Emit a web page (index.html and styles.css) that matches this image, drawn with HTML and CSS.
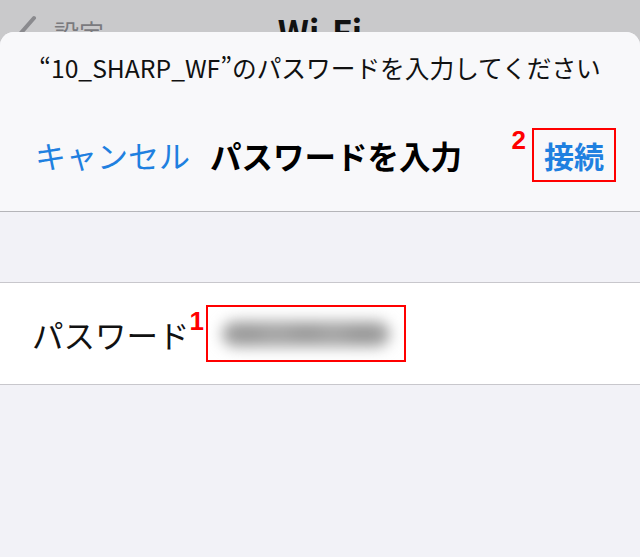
FILE: index.html
```html
<!DOCTYPE html>
<html lang="ja">
<head>
<meta charset="utf-8">
<link rel="stylesheet" href="styles.css">
</head>
<body>
<div class="screen">
  <div class="nav">
    <div class="back">
      <svg class="chev" width="26" height="40" viewBox="0 0 26 40"><polyline points="20,4 6,20 20,36" fill="none" stroke="#8a8a8e" stroke-width="4" stroke-linecap="round" stroke-linejoin="round"/></svg>
      <span class="back-label">設定</span>
    </div>
    <div class="nav-title">Wi-Fi</div>
  </div>
  <div class="sheet">
    <div class="header">
      <div class="prompt">“10_SHARP_WF”のパスワードを入力してください</div>
      <div class="bar">
        <span class="cancel">キャンセル</span>
        <span class="title">パスワードを入力</span>
        <span class="spacer"></span>
        <span class="mark mark-2">2</span>
        <span class="hl hl-join"><span class="join">接続</span></span>
      </div>
    </div>
    <div class="gap"></div>
    <div class="row">
      <span class="label">パスワード</span>
      <span class="mark mark-1">1</span>
      <span class="hl hl-pass">
        <span class="blurred"></span>
      </span>
    </div>
  </div>
</div>
</body>
</html>
```
FILE: styles.css
```css
html, body {
  margin: 0;
  padding: 0;
}
body {
  width: 640px;
  height: 557px;
  overflow: hidden;
  font-family: "Noto Sans CJK JP", "Noto Sans", sans-serif;
  background: #f2f2f7;
}
.screen {
  width: 640px;
  height: 557px;
  display: flex;
  flex-direction: column;
  background: #c9c9cb;
}
.nav {
  height: 32px;
  flex: none;
  overflow: hidden;
  display: flex;
  align-items: flex-start;
  position: relative;
}
.back {
  display: flex;
  align-items: flex-start;
  padding-left: 14px;
  padding-top: 14px;
  gap: 14px;
}
.back-label {
  font-size: 25px;
  line-height: 36px;
  color: #7a7a7e;
}
.nav-title {
  position: absolute;
  left: 0;
  right: 0;
  top: 8px;
  text-align: center;
  font-size: 34px;
  line-height: 46px;
  font-weight: 700;
  color: #111;
}
.sheet {
  flex: 1;
  background: #f2f2f7;
  border-radius: 14px 14px 0 0;
  overflow: hidden;
  display: flex;
  flex-direction: column;
}
.header {
  background: #f8f8fa;
  border-bottom: 1px solid #b5b5b9;
  padding: 20px 0 28px;
}
.prompt {
  text-align: center;
  font-size: 24.7px;
  line-height: 30px;
  color: #111;
  white-space: nowrap;
}
.bar {
  margin-top: 45px;
  height: 56px;
  display: flex;
  align-items: center;
  padding: 0 24px 0 35px;
}
.cancel {
  font-size: 31px;
  line-height: 40px;
  color: #1f80e0;
}
.title {
  margin-left: 20px;
  font-size: 31.5px;
  line-height: 40px;
  font-weight: 700;
  color: #000;
}
.spacer {
  flex: 1;
}
.mark {
  color: #f00;
  font-family: "Liberation Sans", Arial, sans-serif;
  font-weight: 700;
  font-size: 26px;
  line-height: 26px;
  align-self: flex-start;
}
.mark-2 {
  margin-top: 0;
  margin-right: 6px;
}
.hl {
  border: 2px solid #f00;
  box-sizing: border-box;
  display: flex;
  align-items: center;
  justify-content: center;
}
.hl-join {
  width: 84px;
  height: 54px;
}
.join {
  font-size: 30px;
  line-height: 40px;
  font-weight: 700;
  color: #1f80e0;
}
.gap {
  height: 70px;
  flex: none;
}
.row {
  background: #fff;
  border-top: 1px solid #c8c7cc;
  border-bottom: 1px solid #c8c7cc;
  height: 101px;
  display: flex;
  align-items: center;
  padding-left: 32px;
}
.label {
  font-size: 31.5px;
  line-height: 40px;
  color: #111;
}
.mark-1 {
  margin-top: 25px;
  margin-left: 0;
  margin-right: 2px;
}
.hl-pass {
  width: 200px;
  height: 57px;
  overflow: hidden;
}
.blurred {
  display: block;
  width: 168px;
  height: 26px;
  border-radius: 13px;
  background:
    radial-gradient(ellipse 26px 10px at 15% 50%, #929292, transparent),
    radial-gradient(ellipse 26px 10px at 50% 45%, #939393, transparent),
    radial-gradient(ellipse 28px 11px at 84% 50%, #909090, transparent),
    #a6a6a6;
  filter: blur(7px);
}
```
